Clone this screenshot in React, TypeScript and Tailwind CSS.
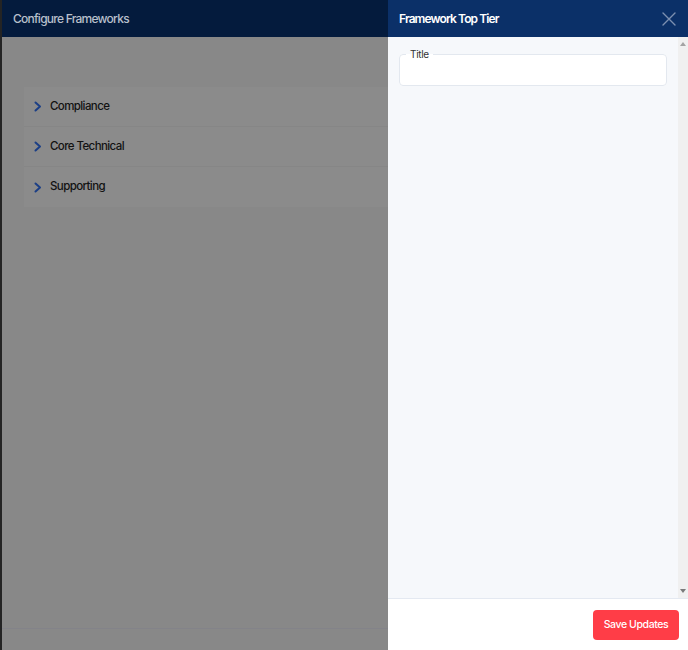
import React from "react";

function Chevron() {
  return (
    <svg width="8" height="11" viewBox="0 0 8 11" fill="none">
      <path d="M1.5 1.5 L6 5.5 L1.5 9.5" stroke="#1c3f86" strokeWidth="2" strokeLinecap="round" strokeLinejoin="round" />
    </svg>
  );
}

export default function App() {
  const rows = ["Compliance", "Core Technical", "Supporting"];
  return (
    <div
      className="relative flex h-[650px] w-[688px] overflow-hidden bg-[#242424]"
      style={{ fontFamily: "Inter, 'Open Sans', sans-serif" }}
    >
      {/* left dialog (dimmed) */}
      <div className="ml-[2px] flex flex-1 flex-col bg-[#888888]">
        <div className="flex h-[37px] items-center bg-[#041b3d] px-[11px]">
          <span className="text-[12px] font-medium tracking-[-0.75px] text-[#b9c0cc]">Configure Frameworks</span>
        </div>
        <div className="flex-1 px-[22px] pt-[50px]">
          <div className="flex flex-col bg-[#8b8b8b]">
            {rows.map((r, i) => (
              <div
                key={r}
                className={`flex h-[40px] items-center gap-[8px] pl-[10px] ${i < rows.length - 1 ? "border-b border-[#868686]" : ""}`}
              >
                <Chevron />
                <span className="text-[11.5px] font-medium tracking-[-0.6px] text-[#121212]">{r}</span>
              </div>
            ))}
          </div>
        </div>
        <div className="h-[22px] border-t border-[#838389]" />
      </div>

      {/* right drawer */}
      <div className="absolute right-0 top-0 flex h-full w-[300px] flex-col bg-white">
        <div className="flex h-[37px] items-center justify-between bg-[#0b3068] pl-[11px] pr-[12px]">
          <span className="text-[12px] font-semibold tracking-[-0.9px] text-white">Framework Top Tier</span>
          <svg width="14" height="14" viewBox="0 0 14 14">
            <path d="M1 1 L13 13 M13 1 L1 13" stroke="#7c8fb0" strokeWidth="1.4" strokeLinecap="round" />
          </svg>
        </div>
        <div className="flex flex-1">
          <div className="flex-1 bg-[#f6f8fb] px-[11px] pt-[12px]">
            <fieldset className="h-[37px] rounded-[4px] border border-[#e3e8ef] bg-white px-[6px]">
              <legend className="px-[4px] text-[10px] leading-[11px] tracking-[-0.3px] text-[#333333]">Title</legend>
            </fieldset>
          </div>
          <div className="flex w-[10px] flex-col items-center justify-between bg-[#f0f0f0] py-[5px]">
            <svg width="6" height="4" viewBox="0 0 6 4"><path d="M0 4 L3 0 L6 4 Z" fill="#a3a3a3" /></svg>
            <svg width="6" height="4" viewBox="0 0 6 4"><path d="M0 0 L3 4 L6 0 Z" fill="#7a7a7a" /></svg>
          </div>
        </div>
        <div className="flex h-[52px] items-center justify-end border-t border-[#e4e9f1] pr-[9px]">
          <button className="h-[30px] w-[86px] rounded-[4px] bg-[#ff3d47] text-[10.5px] font-medium tracking-[-0.4px] text-white">
            Save Updates
          </button>
        </div>
      </div>
    </div>
  );
}
